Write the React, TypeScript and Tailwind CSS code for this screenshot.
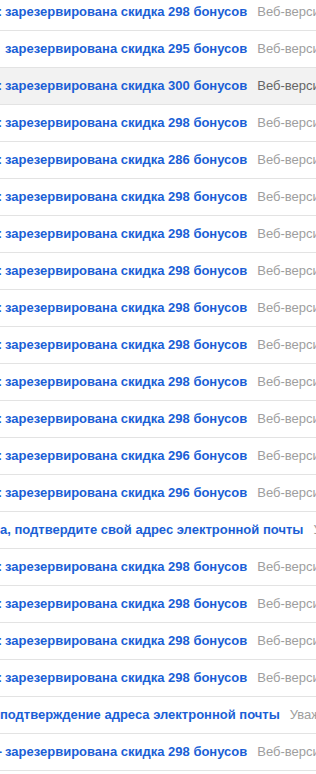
type Row = {
  pre?: string;
  subject: string;
  preview: string;
  start?: number;
  hover?: boolean;
};

const bonus = (n: number, pre = ":"): Row => ({
  pre,
  subject: `зарезервирована скидка ${n} бонусов`,
  preview: "Веб-версия",
});

const rows: Row[] = [
  bonus(298),
  bonus(295, ""),
  { ...bonus(300), hover: true },
  bonus(298),
  bonus(286),
  bonus(298),
  bonus(298),
  bonus(298),
  bonus(298),
  bonus(298),
  bonus(298),
  bonus(298),
  bonus(296),
  bonus(296),
  { subject: "а, подтвердите свой адрес электронной почты", preview: "Уважаемый", start: 0 },
  bonus(298),
  bonus(298),
  bonus(298),
  bonus(298),
  { subject: "подтверждение адреса электронной почты", preview: "Уважаемый", start: 0 },
  bonus(298, "-"),
];

function MailRow({ row }: { row: Row }) {
  return (
    <div
      className={`flex h-[37px] shrink-0 items-center overflow-hidden whitespace-nowrap border-b border-[#e3e3e3] text-[13px] ${
        row.hover ? "bg-[#f2f2f2]" : "bg-white"
      }`}
    >
      {row.start === 0 ? null : (
        <span className="flex w-[5px] shrink-0 justify-end overflow-hidden">
          <span className="mr-[3px] font-bold text-[#1b5fd6]">{row.pre || "\u00a0"}</span>
        </span>
      )}
      <span className="shrink-0 font-bold text-[#1b5fd6]">{row.subject}</span>
      <span className={`ml-[10px] shrink-0 ${row.hover ? "text-[#666666]" : "text-[#9e9e9e]"}`}>
        {row.preview}
      </span>
    </div>
  );
}

export default function App() {
  return (
    <div className="h-[774px] w-[316px] overflow-hidden bg-white font-['Liberation_Sans',Arial,sans-serif]">
      <div className="mt-[-6px] flex flex-col">
        {rows.map((row, i) => (
          <MailRow key={i} row={row} />
        ))}
      </div>
    </div>
  );
}
